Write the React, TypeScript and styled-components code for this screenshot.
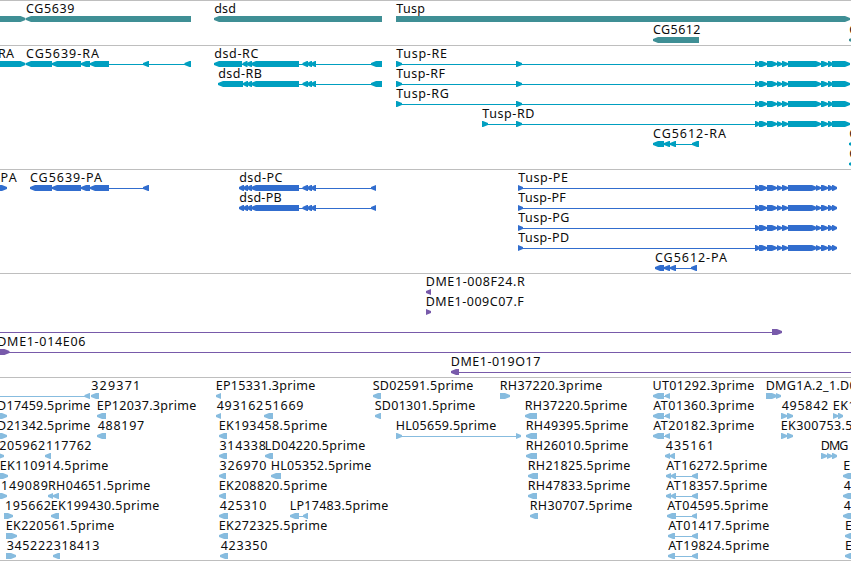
import React from 'react';
import styled, { createGlobalStyle } from 'styled-components';

type Strand = 'left' | 'right';
type Span = [number, number];

interface Feature {
  name?: string;
  // where the label starts and ends
  text?: Span;
  strand: Strand;
  blocks: Span[];
}

interface TrackData {
  id: string;
  color: string;
  rowHeight: number;
  gap: number;
  rows: Feature[][];
}

const WIDTH = 851;
const FONT = "12.5px 'Noto Sans', 'Open Sans', sans-serif";

const GlobalStyle = createGlobalStyle`
  * {
    box-sizing: border-box;
  }

  body {
    margin: 0;
    background-color: #fff;
    overflow: hidden;
  }
`;

const Browser = styled.main`
  width: ${WIDTH}px;
  height: 561px;
  overflow: hidden;
  border-bottom: 1px solid #bebebe;
`;

const TrackBox = styled.section<{ $gap: number }>`
  border-top: 1px solid #bebebe;
  padding: 1px 0 ${({ $gap }) => $gap}px;
`;

const Row = styled.div<{ $height: number }>`
  position: relative;
  height: ${({ $height }) => $height}px;
  padding-top: 14px;
`;

const Lane = styled.svg<{ $color: string }>`
  display: block;
  width: ${WIDTH}px;
  height: 6px;
  fill: ${({ $color }) => $color};
`;

// labels sit over the lane, at the start of their feature
const Label = styled.span`
  position: absolute;
  top: -2px;
  font: ${FONT};
  line-height: 17px;
  color: #0c0c0c;
  white-space: pre;
`;

const f = (strand: Strand, blocks: Span[], name?: string, text?: Span): Feature => ({
  strand,
  blocks,
  name,
  text,
});

// shared exons
const dsdTail: Span[] = [[251, 299], [302.5, 307], [307, 311], [311, 315]];
const tuspExons: Span[] = [[755, 759], [759, 767], [767, 777], [777, 782], [782, 788]];
const tuspR: Span[] = [...tuspExons, [788, 821], [821, 828], [828, 832], [832, 850]];
const tuspP: Span[] = [
  [518, 523], ...tuspExons, [788, 817], [816, 821], [821, 828], [828, 832], [832, 836],
];
const utPair: Span[] = [[653, 664], [665, 670]];
const ekPair: Span[] = [[781, 787], [787, 793]];

const tracks: TrackData[] = [
  {
    id: 'genes',
    color: '#3f8f95',
    rowHeight: 21,
    gap: 1,
    rows: [
      [
        f('right', [[-20, 25.5]]),
        f('left', [[26, 191]], 'CG5639', [26, 74.3]),
        f('left', [[214, 382]], 'dsd', [214.2, 235.3]),
        f('right', [[396, 850]], 'Tusp', [396.3, 424.3]),
      ],
      [
        f('left', [[653, 699]], 'CG5612', [653, 700.3]),
        f('left', [[849, 880]], 'C', [849.3, 857]),
      ],
    ],
  },
  {
    id: 'transcripts',
    color: '#009fc0',
    rowHeight: 20,
    gap: 2,
    rows: [
      [
        f('right', [[-20, 25.5]], 'RA', [-1, 14]),
        f('left', [[26, 52], [52, 81], [81, 90], [90, 109], [143, 149], [184.5, 191]], 'CG5639-RA', [26, 99]),
        f('left', [[214, 242], [242.5, 246.5], [246.5, 251], ...dsdTail, [371, 382]], 'dsd-RC', [214.2, 258.5]),
        f('right', [[396, 402], [516, 522], ...tuspR], 'Tusp-RE', [396.3, 447]),
      ],
      [
        f('left', [[218, 243], [243, 247], [247, 251], ...dsdTail, [371, 382]], 'dsd-RB', [218.2, 261.7]),
        f('right', [[396, 402], [516, 522], ...tuspR], 'Tusp-RF', [396.3, 445.5]),
      ],
      [f('right', [[396, 402], [516, 522], ...tuspR], 'Tusp-RG', [396.3, 448.7])],
      [f('right', [[482, 488], [516, 522], ...tuspR], 'Tusp-RD', [482.3, 534.3])],
      [
        f('left', [[653, 664], [664, 670], [670, 676], [692, 699]], 'CG5612-RA', [653, 726]),
        f('left', [[849, 880]], 'C', [849.3, 857]),
      ],
      [f('left', [[849, 880]], 'C', [849.3, 857])],
    ],
  },
  {
    id: 'proteins',
    color: '#316dce',
    rowHeight: 20,
    gap: 2,
    rows: [
      [
        f('right', [[-10, 7]], 'PA', [1.5, 16.7]),
        f('left', [[30, 52], [52, 81], [81, 90], [90, 109], [143, 149]], 'CG5639-PA', [30, 102]),
        f('left', [[239, 243], [243, 247], [247, 251], ...dsdTail, [371, 376]], 'dsd-PC', [239.2, 282.5]),
        f('right', tuspP, 'Tusp-PE', [518.3, 568]),
      ],
      [
        f('left', [[239, 243], [243, 247], [247, 251], ...dsdTail, [371, 376]], 'dsd-PB', [239.2, 281.5]),
        f('right', tuspP, 'Tusp-PF', [518.3, 566.3]),
      ],
      [f('right', tuspP, 'Tusp-PG', [518.3, 569.3])],
      [f('right', tuspP, 'Tusp-PD', [518.3, 569])],
      [f('left', [[655, 664], [664, 670], [670, 676], [691, 697]], 'CG5612-PA', [655, 727])],
    ],
  },
  {
    id: 'clones',
    color: '#785aaa',
    rowHeight: 20,
    gap: 2,
    rows: [
      [f('left', [[426, 431]], 'DME1-008F24.R', [426.7, 525])],
      [f('right', [[426, 431]], 'DME1-009C07.F', [426.7, 524.3])],
      [f('right', [[-20, -10], [772, 782]])],
      [f('right', [[-10, 9.5], [870, 880]], 'DME1-014E06', [-1.7, 85.3])],
      [f('left', [[451, 459], [870, 880]], 'DME1-019O17', [451.7, 540.3])],
    ],
  },
  {
    id: 'ests',
    color: '#87bcdf',
    rowHeight: 20,
    gap: 1,
    rows: [
      [
        f('left', [[-20, -10], [84.5, 90]]),
        f('left', [[91, 99]], '329371', [91.2, 138]),
        f('left', [[216, 221]], 'EP15331.3prime', [216.7, 315.3]),
        f('left', [[373, 381]], 'SD02591.5prime', [372.7, 473.3]),
        f('right', [[500, 510]], 'RH37220.3prime', [500.7, 602.3]),
        f('left', utPair, 'UT01292.3prime', [653.5, 754.3]),
        f('right', [[766, 777], [776, 781]], 'DMG1A.2_1.D0', [766.7, 856.5]),
      ],
      [
        f('right', [[-5, 7]], 'SD17459.5prime', [-10, 90.3]),
        f('left', [[97, 106]], 'EP12037.3prime', [97.7, 196.3]),
        f('left', [[216, 221]], '493162', [216.7, 263]),
        f('left', [[264, 273]], '51669', [264.7, 303.3]),
        f('left', [[375, 381]], 'SD01301.5prime', [374.7, 475.3]),
        f('left', [[525, 537]], 'RH37220.5prime', [525.7, 627.3]),
        f('left', utPair, 'AT01360.3prime', [653.3, 754.3]),
        f('right', ekPair, '495842', [781.7, 828]),
        f('right', [[833, 838], [838, 842]], 'EK1', [833.7, 853.5]),
      ],
      [
        f('right', [[-5, 7]], 'SD21342.5prime', [-10, 90.3]),
        f('left', [[97, 106]], '488197', [97.7, 144]),
        f('left', [[219, 227]], 'EK193458.5prime', [219.7, 327.3]),
        f('right', [[396, 402], [516, 521]], 'HL05659.5prime', [396.7, 496.3]),
        f('left', [[526, 537]], 'RH49395.5prime', [526.7, 628.3]),
        f('left', utPair, 'AT20182.3prime', [653.3, 754.3]),
        f('right', ekPair, 'EK300753.5prime', [781.7, 889.3]),
      ],
      [
        f('right', [[-5, 4]], '205962', [-0.7, 45]),
        f('left', [[45, 51]], '117762', [47, 91.3]),
        f('left', [[219, 227]], '314338', [219.5, 265.7]),
        f('left', [[265, 273]], 'LD04220.5prime', [265.7, 365.3]),
        f('left', [[526, 537]], 'RH26010.5prime', [526.7, 628.3]),
        f('left', [[665, 670], [670, 674]], '435161', [665.7, 711.7]),
        f('right', [[821, 827], [827, 832], [832, 836]], 'DMG', [821.7, 848.3]),
      ],
      [
        f('right', [[-5, 8]], 'EK110914.5prime', [0.7, 108.3]),
        f('left', [[219, 226]], '326970', [219.5, 266.3]),
        f('left', [[271, 281]], 'HL05352.5prime', [271.7, 371.3]),
        f('left', [[528, 538]], 'RH21825.5prime', [528.7, 630.3]),
        f('left', [[666, 671], [671, 675], [692, 698]], 'AT16272.5prime', [666.3, 767.3]),
        f('left', [[843, 880]], 'E', [844.3, 849.8]),
      ],
      [
        f('right', [[-5, 7]], '149089', [2, 47.7]),
        f('left', [[48, 53], [53, 59]], 'RH04651.5prime', [49, 150.3]),
        f('left', [[219, 226]], 'EK208820.5prime', [219.7, 327.3]),
        f('left', [[528, 537]], 'RH47833.5prime', [528.7, 630.3]),
        f('left', [[666, 671], [671, 675], [692, 698]], 'AT18357.5prime', [666.3, 767.3]),
        f('left', [[843, 880]], '4', [843.7, 850]),
      ],
      [
        f('right', [[4, 13]], '195662', [6, 50.7]),
        f('left', [[51, 59]], 'EK199430.5prime', [51.7, 159.3]),
        f('left', [[219, 228]], '425310', [219.7, 266.3]),
        f('left', [[290, 299], [303, 307]], 'LP17483.5prime', [290.7, 388.3]),
        f('left', [[530, 538]], 'RH30707.5prime', [530.7, 632.3]),
        f('left', [[667, 676], [692, 697]], 'AT04595.5prime', [667.3, 768.3]),
        f('left', [[843, 880]], '4', [843.7, 850]),
      ],
      [
        f('right', [[6, 17]], 'EK220561.5prime', [6.7, 114.3]),
        f('left', [[219, 228]], 'EK272325.5prime', [219.7, 327.3]),
        f('left', [[668, 675], [692, 698]], 'AT01417.5prime', [668.3, 769.3]),
        f('left', [[845, 880]], 'E', [846, 851]),
      ],
      [
        f('right', [[6, 16]], '345222', [6.7, 52.7]),
        f('left', [[53, 60]], '318413', [53.7, 99.3]),
        f('left', [[220, 228]], '423350', [220.7, 267.3]),
        f('left', [[668, 675], [692, 698]], 'AT19824.5prime', [668.3, 769.3]),
        f('left', [[845, 880]], 'E', [846, 851]),
      ],
    ],
  },
];

const pen = document.createElement('canvas').getContext('2d')!;

// spread the letters so that the name fills its span
const fitLabel = (name: string, [start, end]: Span): React.CSSProperties => {
  pen.font = FONT;
  const m = pen.measureText(name);
  const ink = m.actualBoundingBoxLeft + m.actualBoundingBoxRight;
  const spacing = name.length > 1 ? (end - start - ink) / (name.length - 1) : 0;
  return { left: start + m.actualBoundingBoxLeft, letterSpacing: spacing };
};

const arrow = ([a, b]: Span, strand: Strand) => {
  const head = Math.min(5, b - a);
  // the shortest blocks run a little into their neighbour
  const extra = b - a < 5 ? 1 : 0;
  return strand === 'left'
    ? `${a},2 ${a + head},0 ${b + extra},0 ${b + extra},6 ${a + head},6 ${a},4`
    : `${b + extra},2 ${b + extra - head},0 ${a},0 ${a},6 ${b + extra - head},6 ${b + extra},4`;
};

const Glyph: React.FC<{ feature: Feature }> = ({ feature }) => {
  const { blocks, strand } = feature;
  const start = blocks[0][0];
  const end = blocks[blocks.length - 1][1];

  return (
    <g>
      {blocks.length > 1 && <rect x={start + 1} y={3} width={end - start - 2} height={1} />}
      {blocks.map((block, i) => (
        <polygon key={i} points={arrow(block, strand)} />
      ))}
    </g>
  );
};

const Track: React.FC<{ track: TrackData }> = ({ track }) => (
  <TrackBox $gap={track.gap}>
    {track.rows.map((row, i) => (
      <Row key={i} $height={track.rowHeight}>
        {row.map(
          (feature, j) =>
            feature.name &&
            feature.text && (
              <Label key={j} style={fitLabel(feature.name, feature.text)}>
                {feature.name}
              </Label>
            ),
        )}
        <Lane $color={track.color} viewBox={`0 0 ${WIDTH} 6`}>
          {row.map((feature, j) => (
            <Glyph key={j} feature={feature} />
          ))}
        </Lane>
      </Row>
    ))}
  </TrackBox>
);

const App: React.FC = () => (
  <>
    <GlobalStyle />
    <Browser>
      {tracks.map((track) => (
        <Track key={track.id} track={track} />
      ))}
    </Browser>
  </>
);

export default App;
